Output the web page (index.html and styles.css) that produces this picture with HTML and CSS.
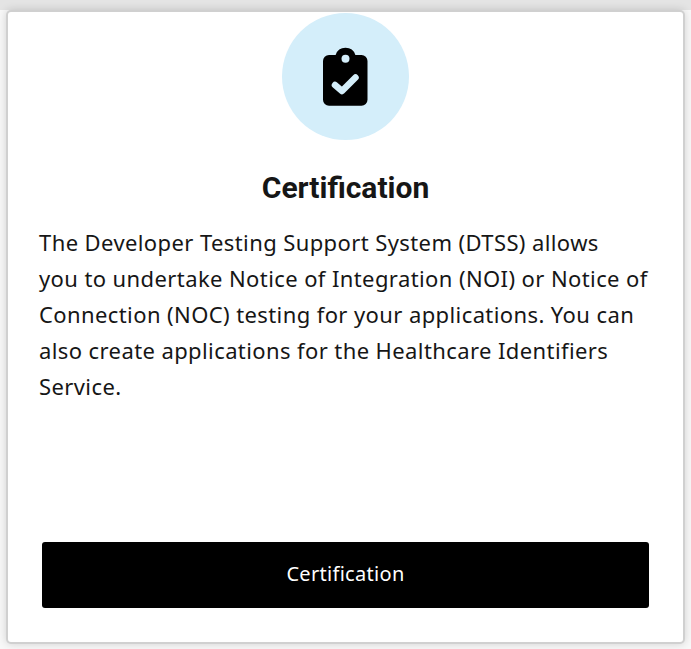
FILE: index.html
```html
<!DOCTYPE html>
<html lang="en">
<head>
<meta charset="utf-8">
<title>Certification</title>
<link rel="stylesheet" href="styles.css">
</head>
<body>
<main class="card">
  <div class="icon-circle">
    <svg class="icon" viewBox="0 0 45 59" width="45" height="59" aria-hidden="true">
      <path fill="#000" d="M6 8h6.600a10.400 10.400 0 0 1 19.800 0H38.500a6 6 0 0 1 6 6v38.700a6 6 0 0 1-6 6H6a6 6 0 0 1-6-6V14a6 6 0 0 1 6-6z"/>
      <circle class="icon-cut" cx="22.500" cy="11.700" r="4"/>
      <polyline class="icon-check" points="12,38 19,44 32.500,30.500"/>
    </svg>
  </div>
  <h2 class="title">Certification</h2>
  <p class="text">The Developer Testing Support System (DTSS) allows<br>you to undertake Notice of Integration (NOI) or Notice of<br>Connection (NOC) testing for your applications. You can<br>also create applications for the Healthcare Identifiers<br>Service.</p>
  <a class="button" href="#">Certification</a>
</main>
</body>
</html>
```
FILE: styles.css
```css
html, body { height: 100%; }
body {
  margin: 0;
  padding: 12px 8px 7px;
  box-sizing: border-box;
  background: #f8f8f8;
  background-image: linear-gradient(#e4e4e4, #e4e4e4);
  background-size: 100% 10px;
  background-repeat: no-repeat;
  overflow: hidden;
}
.card {
  box-sizing: border-box;
  width: 675px;
  height: 630px;
  background: #fff;
  border-radius: 3px;
  box-shadow: 0 0 0 2px #d0d0d0, 0 0 8px 2px rgba(0,0,0,.16);
  padding: 1px 31px 34px;
  display: flex;
  flex-direction: column;
  font-family: "Noto Sans", sans-serif;
  color: #161616;
}
.icon-circle {
  width: 127px;
  height: 127px;
  border-radius: 50%;
  background: #d4eefa;
  align-self: center;
  display: flex;
  align-items: center;
  justify-content: center;
  flex: none;
}
.icon { display: block; }
.icon-cut { fill: #d4eefa; }
.icon-check {
  fill: none;
  stroke: #d4eefa;
  stroke-width: 6.5;
  stroke-linecap: round;
  stroke-linejoin: round;
}
.title {
  margin: 30px 0 0;
  font: 700 30px/36px Roboto, sans-serif;
  text-align: center;
  color: #161616;
}
.text {
  margin: 18px 0 0;
  font-size: 22px;
  line-height: 36px;
  letter-spacing: .4px;
  white-space: nowrap;
}
.button {
  margin: auto 3px 0;
  height: 66px;
  padding-bottom: 4px;
  box-sizing: border-box;
  flex: none;
  display: flex;
  align-items: center;
  justify-content: center;
  background: #000;
  color: #fff;
  border-radius: 3px;
  text-decoration: none;
  font-size: 20px;
  letter-spacing: .3px;
}
```
